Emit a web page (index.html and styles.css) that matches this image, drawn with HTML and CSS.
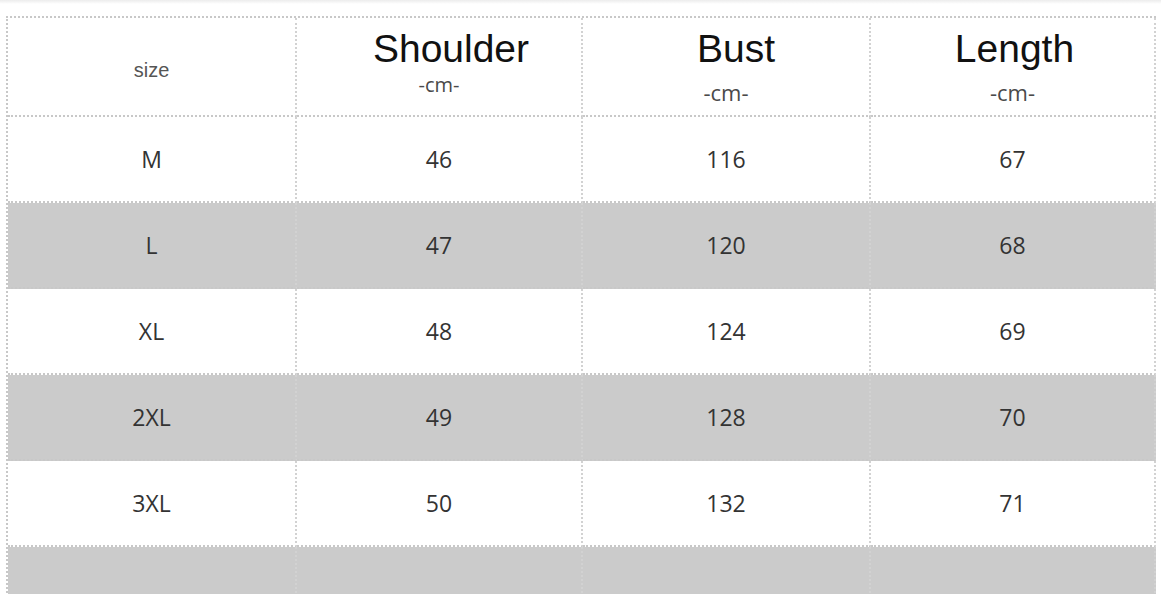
FILE: index.html
```html
<!DOCTYPE html>
<html>
<head>
<meta charset="utf-8">
<link rel="stylesheet" href="styles.css">
</head>
<body>
<div class="topstrip"></div>
<div class="chart">
  <div class="cell head"><span class="size-label">size</span></div>
  <div class="cell head th">
    <span class="title title-shoulder">Shoulder</span>
    <span class="unit unit-small">-cm-</span>
  </div>
  <div class="cell head th">
    <span class="title title-bust">Bust</span>
    <span class="unit">-cm-</span>
  </div>
  <div class="cell head th">
    <span class="title title-length">Length</span>
    <span class="unit">-cm-</span>
  </div>

  <div class="cell">M</div><div class="cell">46</div><div class="cell">116</div><div class="cell">67</div>
  <div class="cell alt">L</div><div class="cell alt">47</div><div class="cell alt">120</div><div class="cell alt">68</div>
  <div class="cell">XL</div><div class="cell">48</div><div class="cell">124</div><div class="cell">69</div>
  <div class="cell alt">2XL</div><div class="cell alt">49</div><div class="cell alt">128</div><div class="cell alt">70</div>
  <div class="cell">3XL</div><div class="cell">50</div><div class="cell">132</div><div class="cell">71</div>
  <div class="cell alt"></div><div class="cell alt"></div><div class="cell alt"></div><div class="cell alt"></div>
</div>
</body>
</html>
```

FILE: styles.css
```css
html, body {
  margin: 0;
  padding: 0;
  background: #ffffff;
  overflow: hidden;
}

body {
  width: 1161px;
  height: 594px;
  position: relative;
}

.topstrip {
  height: 4px;
  background: linear-gradient(#ececec, #ffffff);
}

.chart {
  margin: 12px 0 0 6px;
  width: 1148px;
  display: grid;
  grid-template-columns: 289px 286px 288px 285px;
  grid-template-rows: 99px repeat(6, 86px);
  border-top: 2px dotted #c8c8c8;
  border-left: 2px dotted #c8c8c8;
}

.cell {
  border-right: 2px dotted #d2d2d2;
  border-bottom: 2px dotted #c8c8c8;
  display: flex;
  align-items: center;
  justify-content: center;
  font-family: "Open Sans", "DejaVu Sans", sans-serif;
  font-size: 23px;
  color: #333333;
  background: #ffffff;
}

.cell.alt {
  background: #cbcbcb;
}

.head .size-label {
  font-family: "Liberation Sans", Arial, sans-serif;
  font-size: 20px;
  color: #555555;
  margin-top: 8px;
}

.th {
  flex-direction: column;
  justify-content: flex-start;
  align-items: center;
  padding-top: 11px;
}

.title {
  font-family: "Liberation Sans", Arial, sans-serif;
  font-size: 39px;
  line-height: 40px;
  color: #111111;
}

.title-shoulder { padding-left: 24px; }
.title-bust { padding-left: 20px; }
.title-length { padding-left: 4px; }

.unit {
  font-family: "Open Sans", "DejaVu Sans", sans-serif;
  font-size: 22px;
  line-height: 26px;
  color: #4a4a4a;
  margin-top: 10px;
}

.unit-small {
  font-size: 20px;
  line-height: 24px;
  margin-top: 4px;
}
```
